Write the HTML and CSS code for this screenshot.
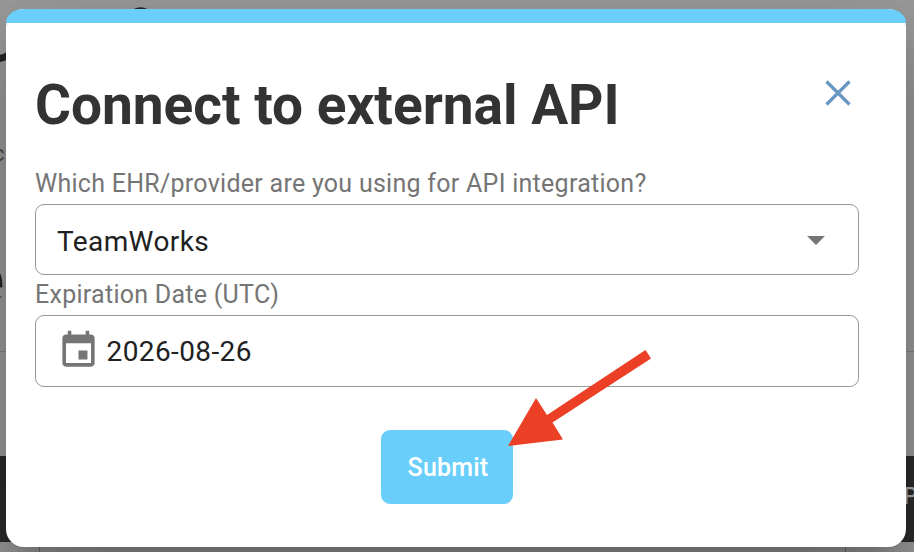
FILE: index.html
```html
<!DOCTYPE html>
<html lang="en">
<head>
    <meta charset="UTF-8">
    <meta name="viewport" content="width=device-width, initial-scale=1.0">
    <title>Connect to external API</title>
    <link rel="stylesheet" href="styles.css">
</head>
<body>
    <!-- dimmed page behind the dialog -->
    <div class="page">
        <svg class="page-art" width="914" height="552" viewBox="0 0 914 552">
            <path d="M-2 58.500Q4 58.500 10 54" fill="none" stroke="#262626" stroke-width="7"/>
            <path d="M133 11Q140 6.500 148 11" fill="none" stroke="#262626" stroke-width="3"/>
            <path d="M0 351.500H914" stroke="#848484"/>
            <path d="M39.500 542V552M845.500 542V552" stroke="#707070"/>
            <path d="M0 274Q2 278 2 287H0M0 297H1.500" fill="#262626" stroke="#262626" stroke-width="1"/>
        </svg>
        <span class="page-text">c</span>
        <div class="page-footer"><span>P</span></div>
    </div>

    <div class="dialog">
        <div class="dialog-bar"></div>
        <div class="dialog-header">
            <h2>Connect to external API</h2>
            <button class="close" aria-label="Close">
                <svg width="26" height="26" viewBox="0 0 26 26">
                    <path d="M1.500 1.500L24.500 24.500M24.500 1.500L1.500 24.500" stroke="#6796c0" stroke-width="3.200"/>
                </svg>
            </button>
        </div>

        <label>Which EHR/provider are you using for API integration?</label>
        <div class="field select">
            <span>TeamWorks</span>
            <svg width="18" height="9" viewBox="0 0 18 9">
                <path d="M0 0H18L9 9Z" fill="#757575"/>
            </svg>
        </div>

        <label>Expiration Date (UTC)</label>
        <div class="field date">
            <svg width="43" height="43" viewBox="0 0 24 24">
                <path d="M19 3h-1V1h-2v2H8V1H6v2H5c-1.11 0-1.99.9-1.99 2L3 19c0 1.1.89 2 2 2h14c1.1 0 2-.9 2-2V5c0-1.1-.9-2-2-2zm0 16H5V8h14v11zm-2-7h-5v5h5v-5z" fill="#757575"/>
            </svg>
            <span>2026-08-26</span>
        </div>

        <div class="actions">
            <button class="submit">Submit</button>
        </div>
    </div>

    <svg class="arrow" width="143" height="97" viewBox="0 0 143 97">
        <path d="M0 96L28 48L39 65L137.500 0L143 8.500L44.500 72.500L55 89.500Z" fill="#eb4025"/>
    </svg>
</body>
</html>
```

FILE: styles.css
```css
* {
    font-family: Roboto, Arial, sans-serif;
    margin: 0;
    padding: 0;
    box-sizing: border-box;
}
body {
    height: 552px;
    padding: 9px 8px 5px 6px;
    overflow: hidden;
}
.page {
    position: absolute;
    inset: 0;
    background: #9c9c9c;
    overflow: hidden;
}
.page-art {
    display: block;
}
.page-text {
    position: absolute;
    left: -7px;
    top: 141px;
    font-size: 22px;
    color: #4a4a4a;
}
.page-footer {
    position: absolute;
    left: 0;
    right: 0;
    top: 456px;
    height: 86px;
    background: #2c2c2c;
}
.page-footer span {
    position: absolute;
    left: 903px;
    top: 27px;
    font-size: 23px;
    font-weight: 500;
    color: #aaa;
}
.dialog {
    position: relative;
    height: 538px;
    padding: 0 47px 0 29px;
    border-radius: 18px;
    background: white;
    box-shadow: 0 22px 30px -14px rgba(0,0,0,0.2), 0 48px 76px 6px rgba(0,0,0,0.14), 0 18px 92px 16px rgba(0,0,0,0.12);
}
.dialog-bar {
    height: 14px;
    margin: 0 -47px 0 -29px;
    border-radius: 18px 18px 0 0 / 14px 14px 0 0;
    background: #69cffa;
}
.dialog-header {
    display: flex;
    justify-content: space-between;
    padding: 50px 8.5px 0 0;
    height: 144px;
}
h2 {
    font-size: 55px;
    line-height: 64px;
    font-weight: 700;
    letter-spacing: -0.02px;
    color: #333;
    white-space: nowrap;
}
button {
    border: none;
    cursor: pointer;
}
.close {
    width: 26px;
    height: 26px;
    margin-top: 7px;
    background: none;
}
.close svg {
    display: block;
}
label {
    display: block;
    height: 37px;
    line-height: 34px;
    font-size: 25px;
    letter-spacing: 0.27px;
    color: #757575;
}
.field {
    display: flex;
    align-items: center;
    width: 824px;
    height: 71px;
    padding: 0 33px 0 21px;
    border: 1px solid #999;
    border-radius: 9px;
    font-size: 28px;
    letter-spacing: 0.4px;
    color: #212121;
}
.select {
    justify-content: space-between;
    margin-bottom: 3px;
    padding-top: 2px;
}
.select span {
    padding-top: 2px;
}
.date {
    height: 72px;
    gap: 7px;
    padding-left: 20.5px;
    padding-bottom: 1px;
}
.date span {
    padding-top: 1px;
}
.actions {
    display: flex;
    justify-content: center;
    padding-top: 43px;
}
.submit {
    width: 132px;
    height: 74px;
    padding-left: 2px;
    border-radius: 9px;
    background: #69cffa;
    color: white;
    font-size: 25px;
    font-weight: 500;
    letter-spacing: 0.2px;
}
.arrow {
    position: absolute;
    left: 508px;
    top: 350px;
}
```
